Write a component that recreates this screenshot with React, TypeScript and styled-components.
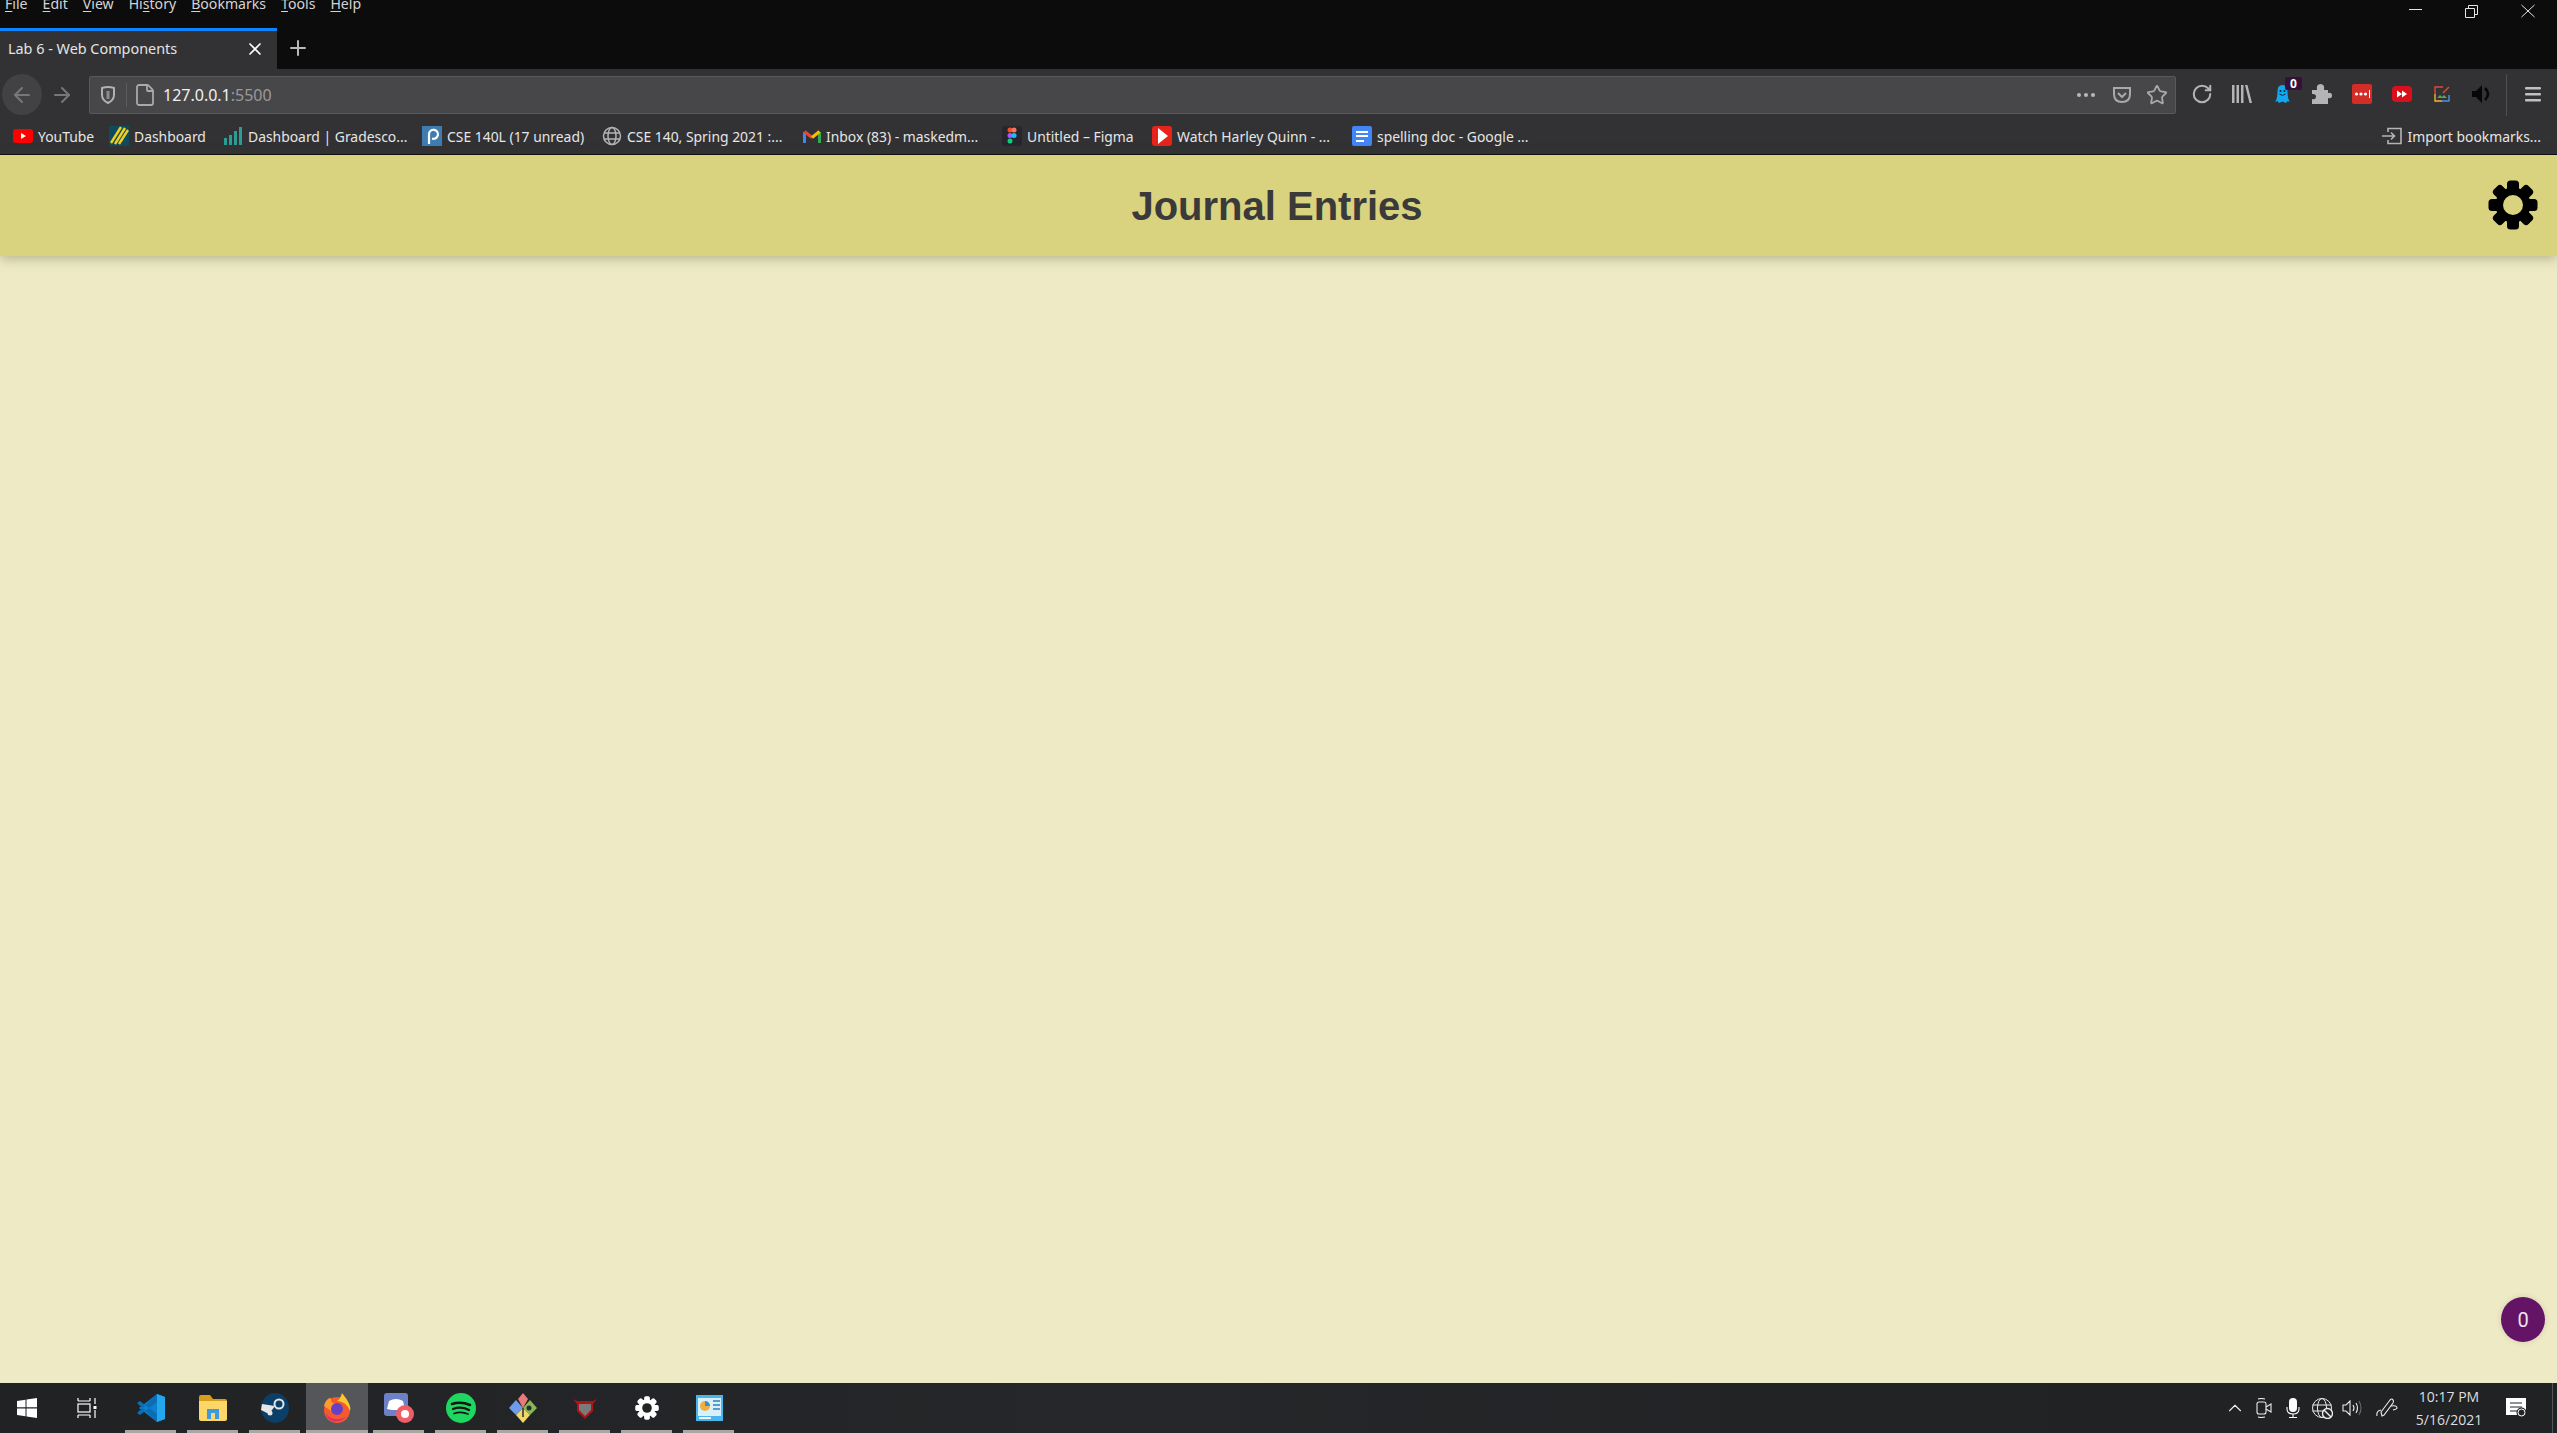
import { createGlobalStyle, styled } from 'styled-components';
import {
  ArrowLeft,
  ArrowRight,
  ChevronUp,
  File,
  Plus,
  RotateCw,
  Star,
  X,
} from 'lucide-react';

const GlobalStyle = createGlobalStyle`
  html, body, #root {
    height: 100%;
    margin: 0;
  }

  body {
    overflow: hidden;
    background-color: #eeeac5;
    font-family: 'Noto Sans', 'Open Sans', sans-serif;
  }
`;

const Page = styled.div`
  display: flex;
  flex-direction: column;

  width: 2557px;
  height: 1433px;
`;

const TitleBar = styled.div`
  display: flex;
  flex-shrink: 0;

  height: 69px;

  background-color: #0c0c0c;
`;

const TitleLeft = styled.div`
  display: flex;
  flex-direction: column;
  flex: 1;
`;

const MenuRow = styled.div`
  display: flex;
  gap: 15px;

  height: 28px;
  padding-left: 5px;

  overflow: hidden;
`;

const MenuItem = styled.span`
  margin-top: -6px;

  color: #d4d4d4;

  font-size: 14.1px;
  line-height: 20px;

  & > u {
    text-underline-offset: 2px;
  }
`;

const TabRow = styled.div`
  display: flex;
  align-items: center;

  height: 41px;
`;

const Tab = styled.div`
  display: flex;
  justify-content: space-between;
  align-items: center;

  width: 277px;
  height: 41px;
  padding: 0 12px 3px 8px;
  box-sizing: border-box;

  border-top: 3px solid #0a84ff;

  background-color: #323234;
  color: #e4e4e4;

  font-size: 14.4px;
`;

const NewTab = styled.div`
  display: flex;
  justify-content: center;

  width: 42px;
  margin-top: -2px;

  color: #b9b9bb;
`;

const WindowControls = styled.div`
  display: flex;
  gap: 43px;

  width: 148px;
  padding: 4px 0 0 0;
`;

const Toolbar = styled.div`
  display: flex;
  flex-shrink: 0;
  align-items: center;

  height: 49px;
  padding: 0 4px 0 2px;
  box-sizing: border-box;

  background-color: #323234;
`;

const NavButton = styled.div<{ $round?: boolean }>`
  display: flex;
  justify-content: center;
  align-items: center;

  width: 40px;
  height: 41px;
  margin-top: 2px;

  border-radius: 50%;
  background-color: ${({ $round }) => ($round ? '#424244' : 'transparent')};
  color: #77777a;
`;

const UrlBar = styled.div`
  display: flex;
  flex: 1;
  align-items: center;

  height: 38px;
  margin: 3px 0 0 7px;
  box-sizing: border-box;

  border: 1px solid #59595b;
  border-radius: 2px;
  background-color: #474749;
  color: #a9a9ab;
`;

const UrlSlot = styled.div<{ $width: number; $divider?: boolean }>`
  display: flex;
  justify-content: center;
  align-items: center;

  width: ${({ $width }) => $width}px;
  height: 24px;

  border-right: ${({ $divider }) => ($divider ? '1px solid #5d5d5f' : '0')};
`;

const UrlText = styled.div`
  flex: 1;

  color: #f0f0f0;

  font-size: 16px;

  & > span {
    color: #9a9a9c;
  }
`;

const ToolCell = styled.div`
  display: flex;
  justify-content: center;
  align-items: center;

  width: 40px;
  height: 40px;

  color: #b4b4b6;
`;

const ToolActions = styled.div`
  display: flex;

  margin-left: 6px;
`;

const ToolDivider = styled.div`
  width: 1px;
  height: 42px;
  margin: 3px 6px 0 4px;

  background-color: #505052;
`;

const BookmarksBar = styled.div`
  display: flex;
  flex-shrink: 0;
  align-items: center;

  height: 37px;
  padding: 0 16px 0 13px;
  box-sizing: border-box;

  border-bottom: 1px solid #0c0c0c;

  background-color: #323234;
  color: #e6e6e6;

  font-size: 13.9px;
`;

const Bookmark = styled.div<{ $width: number }>`
  display: flex;
  align-items: center;
  gap: 5px;

  width: ${({ $width }) => $width}px;

  white-space: nowrap;
`;

const ImportBookmarks = styled.div`
  display: flex;
  align-items: center;
  gap: 5px;

  margin-left: auto;

  white-space: nowrap;
`;

const Content = styled.main`
  flex: 1;
  position: relative;

  background-color: #eeeac5;
`;

const Header = styled.header`
  display: grid;
  grid-template-columns: 1fr auto 1fr;
  align-items: center;

  height: 101px;

  background-color: #d9d27e;
  box-shadow: 0 2px 12px rgba(60, 60, 30, 0.35);
`;

const Title = styled.h1`
  grid-column: 2;
  margin: 2px 0 0 -3px;

  color: #3a3a3a;

  font-family: 'Liberation Sans', Arial, sans-serif;
  font-size: 40px;
  font-weight: bold;
`;

const SettingsButton = styled.div`
  display: flex;
  justify-self: end;

  margin: -2px 19px 0 0;
`;

const CountBadge = styled.div`
  display: flex;
  justify-content: center;
  align-items: center;

  width: 44px;
  height: 45px;

  position: absolute;
  right: 12px;
  bottom: 41px;

  border-radius: 50%;
  background-color: #641464;
  box-shadow: 0 0 6px rgba(0, 0, 0, 0.12);
  color: #eee2ee;

  font-family: Roboto, sans-serif;
  font-size: 20px;
`;

const Taskbar = styled.footer`
  display: flex;
  flex-shrink: 0;

  height: 50px;

  background: linear-gradient(90deg, #212224 0%, #26272a 45%, #222325 70%, #212224 100%);
`;

const StartCell = styled.div<{ $width: number }>`
  display: flex;
  justify-content: center;
  align-items: center;

  width: ${({ $width }) => $width}px;
`;

const TaskCell = styled.div<{ $active?: boolean }>`
  display: flex;
  justify-content: center;
  align-items: center;

  width: 62px;

  position: relative;

  background-color: ${({ $active }) => ($active ? '#55565a' : 'transparent')};

  &::after {
    content: '';

    height: 3px;

    position: absolute;
    left: ${({ $active }) => ($active ? '0' : '5px')};
    right: ${({ $active }) => ($active ? '0' : '6px')};
    bottom: 0;

    background-color: #aba6a1;
  }
`;

const Tray = styled.div`
  display: flex;
  align-items: center;

  height: 100%;
  margin-left: auto;
  padding-right: 4px;
  color: #ececec;
`;

const TrayIcon = styled.div<{ $width: number }>`
  display: flex;
  justify-content: center;

  width: ${({ $width }) => $width}px;
`;

const Clock = styled.div`
  width: 82px;

  color: #dedede;

  font-family: 'Open Sans', sans-serif;
  font-size: 14px;
  line-height: 23px;
  text-align: center;
`;

const DesktopEdge = styled.div`
  width: 1px;
  height: 100%;
  margin-left: 10px;

  background-color: #55565a;
`;

const Gear = ({ size, color, hole }: { size: number; color: string; hole: string }) => (
  <svg width={size} height={size} viewBox="0 0 100 100">
    {[0, 45, 90, 135].map((angle) => (
      <rect
        key={angle}
        x="38"
        y="1"
        width="24"
        height="98"
        rx="7"
        fill={color}
        transform={`rotate(${angle} 50 50)`}
      />
    ))}
    <circle cx="50" cy="50" r="35" fill={color} />
    <circle cx="50" cy="50" r="20" fill={hole} />
  </svg>
);

const Shield = () => (
  <svg width="16" height="20" viewBox="0 0 16 20" fill="none" stroke="#b0b0b2" strokeWidth="2">
    <path d="M2 3 Q8 1 14 3 V10 Q14 15 8 18 Q2 15 2 10 Z" />
    <path d="M8 6 V14" strokeWidth="3" stroke="#8c8c8e" />
  </svg>
);

const Pocket = () => (
  <svg width="20" height="18" viewBox="0 0 20 18" fill="none" stroke="#a9a9ab" strokeWidth="2">
    <path d="M2 2 H18 V8 Q18 16 10 16 Q2 16 2 8 Z" />
    <path d="M6 7 L10 11 L14 7" />
  </svg>
);

const Library = () => (
  <svg width="20" height="18" viewBox="0 0 20 18" fill="#b4b4b6">
    <rect x="0" y="0" width="2.5" height="18" />
    <rect x="4.5" y="0" width="2.5" height="18" />
    <rect x="9" y="0" width="2.5" height="18" />
    <path d="M13 0 L15.5 0 L20 18 L17.5 18 Z" />
  </svg>
);

const Ghost = () => (
  <svg width="40" height="34" viewBox="0 0 40 34">
    <path
      d="M13 25 Q15.5 22 15.5 14 Q15.5 8 20.5 8 Q25.5 8 25.5 14 Q25.5 22 28 25 L25.5 24 L24 26 L20.5 24.5 L17 26 L15.5 24 Z"
      fill="#12a8f0"
    />
    <circle cx="18.5" cy="14" r="1.1" fill="#0c2a3a" />
    <circle cx="22.5" cy="14" r="1.1" fill="#0c2a3a" />
    <path d="M17.5 17 Q20.5 20 23.5 17" fill="none" stroke="#0c2a3a" />
    <rect x="23" y="0" width="17" height="13" rx="2" fill="#35103a" />
    <text x="31.5" y="10.5" fill="#ffffff" fontSize="12" fontWeight="700" textAnchor="middle">
      0
    </text>
  </svg>
);

const PuzzlePiece = () => (
  <svg width="20" height="20" viewBox="0 0 20 20" fill="#b4b4b6">
    <path d="M0 6 H5 Q4 0 8.5 0 Q13 0 12 6 H16 V9 Q20 8 20 11.5 Q20 15 16 14 V20 H0 V15 Q4 16 4 12.5 Q4 9.5 0 10 Z" />
  </svg>
);

const LastPass = () => (
  <svg width="20" height="20" viewBox="0 0 20 20">
    <rect width="20" height="20" rx="2" fill="#d32d27" />
    <circle cx="4.5" cy="10" r="1.6" fill="#fff" />
    <circle cx="9" cy="10" r="1.6" fill="#fff" />
    <circle cx="13.5" cy="10" r="1.6" fill="#fff" />
    <rect x="17" y="6" width="1" height="8" fill="#fff" />
  </svg>
);

const FastForward = () => (
  <svg width="20" height="16" viewBox="0 0 20 16">
    <rect width="20" height="16" rx="4" fill="#d8101c" />
    <path d="M5 4.5 L10 8 L5 11.5 Z M10 4.5 L15 8 L10 11.5 Z" fill="#fff" />
  </svg>
);

const ColorFrame = () => (
  <svg width="16" height="16" viewBox="0 0 16 16" fill="none" strokeWidth="1.4">
    <path d="M9 1 H1 V8" stroke="#e0483a" />
    <path d="M1 8 V15 H8" stroke="#f2b632" />
    <path d="M8 15 H15 V9" stroke="#4f8fe6" />
    <path d="M15 1 L9 7" stroke="#e0483a" />
    <path d="M3 12 L6 9 L8 11 L10 9 L13 12 Z" fill="#5fa052" stroke="none" />
  </svg>
);

const BlackSpeaker = () => (
  <svg width="20" height="20" viewBox="0 0 20 20">
    <path d="M0 7 H4 L10 1 V19 L4 13 H0 Z" fill="#070707" />
    <path d="M13 4 Q19 10 13 16" fill="none" stroke="#070707" strokeWidth="2.5" />
  </svg>
);

const Hamburger = () => (
  <svg width="16" height="16" viewBox="0 0 16 16" fill="#c0c0c2">
    <rect y="1" width="16" height="2.4" rx="1" />
    <rect y="7" width="16" height="2.4" rx="1" />
    <rect y="13" width="16" height="2.4" rx="1" />
  </svg>
);

const YouTubeFav = () => (
  <svg width="20" height="14" viewBox="0 0 20 14">
    <rect width="20" height="14" rx="3" fill="#f00" />
    <path d="M8 4 L13 7 L8 10 Z" fill="#fff" />
  </svg>
);

const CanvasFav = () => (
  <svg width="20" height="20" viewBox="0 0 20 20">
    <rect width="20" height="20" fill="#0f4b5e" />
    <path d="M2 17 L12 1 M6 18 L16 2 M10 18 L19 4" stroke="#f2cf1d" strokeWidth="2.4" />
  </svg>
);

const GradescopeFav = () => (
  <svg width="20" height="18" viewBox="0 0 20 18" fill="#2a9d96">
    <rect x="1" y="11" width="3" height="7" />
    <rect x="6" y="8" width="3" height="10" />
    <rect x="11" y="4" width="3" height="14" />
    <rect x="16" y="0" width="3" height="18" />
  </svg>
);

const PiazzaFav = () => (
  <svg width="20" height="20" viewBox="0 0 20 20">
    <rect width="20" height="20" fill="#3f7cb1" />
    <path d="M7 18 V8 A4.5 4.5 0 1 1 10 12.5" fill="none" stroke="#fff" strokeWidth="2.2" />
  </svg>
);

const GlobeFav = () => (
  <svg width="20" height="20" viewBox="0 0 20 20" fill="none" stroke="#b4b4b6" strokeWidth="1.5">
    <circle cx="10" cy="10" r="8.5" />
    <ellipse cx="10" cy="10" rx="4" ry="8.5" />
    <path d="M2 7 H18 M2 13 H18" />
  </svg>
);

const GmailFav = () => (
  <svg width="18" height="14" viewBox="0 0 18 14" fill="none" strokeWidth="3">
    <path d="M1.5 14 V3" stroke="#4285f4" />
    <path d="M16.5 14 V3" stroke="#34a853" />
    <path d="M1.5 2.5 L9 8.5" stroke="#ea4335" />
    <path d="M9 8.5 L16.5 2.5" stroke="#fbbc04" />
  </svg>
);

const FigmaFav = () => (
  <svg width="20" height="20" viewBox="0 0 20 20">
    <rect width="20" height="20" rx="3" fill="#26262c" />
    <circle cx="8" cy="4" r="2.5" fill="#f24e1e" />
    <circle cx="12" cy="4" r="2.5" fill="#ff7262" />
    <circle cx="8" cy="9.5" r="2.5" fill="#a259ff" />
    <circle cx="12" cy="9.5" r="2.5" fill="#1abcfe" />
    <circle cx="8" cy="15" r="2.5" fill="#0acf83" />
  </svg>
);

const PlayFav = () => (
  <svg width="20" height="20" viewBox="0 0 20 20">
    <rect width="20" height="20" rx="3" fill="#e8231a" />
    <path d="M6 2 L16 10 L6 18 Z" fill="#fff" />
  </svg>
);

const DocsFav = () => (
  <svg width="20" height="20" viewBox="0 0 20 20">
    <rect x="0" width="20" height="20" rx="2" fill="#4285f4" />
    <rect x="4" y="5" width="12" height="2" fill="#fff" />
    <rect x="4" y="9" width="12" height="2" fill="#fff" />
    <rect x="4" y="14" width="8" height="2" fill="#fff" />
  </svg>
);

const ImportIcon = () => (
  <svg width="20" height="18" viewBox="0 0 20 18" fill="none" stroke="#b4b4b6" strokeWidth="1.6">
    <path d="M6 5 V1.5 H19 V16.5 H6 V13" />
    <path d="M0 9 H12 M9 5.5 L12.5 9 L9 12.5" />
  </svg>
);

const WindowsLogo = () => (
  <svg width="20" height="20" viewBox="0 0 20 20" fill="#ffffff">
    <path d="M0 3 L8.5 1.7 V9.3 H0 Z M9.5 1.5 L20 0 V9.3 H9.5 Z M0 10.5 H8.5 V18.3 L0 17 Z M9.5 10.5 H20 V20 L9.5 18.5 Z" />
  </svg>
);

const TaskView = () => (
  <svg width="20" height="20" viewBox="0 0 20 20" fill="none" stroke="#ffffff" strokeWidth="1.2">
    <path d="M1 3 H13 M1 0 V3 M13 0 V3 M1 17 H13 M1 20 V17 M13 20 V17" />
    <rect x="1" y="6" width="12" height="8" />
    <path d="M18 0 V6 M18 12 V20" />
    <rect x="16.5" y="8" width="3" height="3" fill="#fff" stroke="none" />
  </svg>
);

const VsCode = () => (
  <svg width="30" height="30" viewBox="0 0 30 30">
    <path d="M21 1 L29 4 V26 L21 29 L3 15 Z" fill="#0e80cc" />
    <path d="M21 1 L29 4 V26 L21 29 Z" fill="#22a6ee" />
    <path d="M1 10 L4 8 L21 21 V29 Z M1 20 L4 22 L21 9 V1 Z" fill="#0a6db5" />
  </svg>
);

const Explorer = () => (
  <svg width="28" height="26" viewBox="0 0 28 26">
    <path d="M0 2 Q0 0 2 0 H11 L14 4 H26 Q28 4 28 6 V10 H0 Z" fill="#d69e1a" />
    <path d="M0 6 H28 V24 Q28 26 26 26 H2 Q0 26 0 24 Z" fill="#fcd667" />
    <path d="M8 24 V14 H20 V24 H16 V18 H12 V24 Z" fill="#3d9ae0" />
  </svg>
);

const Steam = () => (
  <svg width="30" height="30" viewBox="0 0 30 30">
    <ellipse cx="15" cy="15" rx="14" ry="15" fill="#0b3f68" />
    <path d="M1 17 L9 21 L15 13 L2 11 Z" fill="#e6e6e6" />
    <circle cx="19" cy="11" r="4.5" fill="none" stroke="#e6e6e6" strokeWidth="2" />
    <circle cx="10" cy="20" r="2.5" fill="#e6e6e6" />
  </svg>
);

const Firefox = () => (
  <svg width="30" height="30" viewBox="0 0 30 30">
    <circle cx="15" cy="17" r="13" fill="#f35b2d" />
    <path d="M20 0 Q30 12 28 18 Q24 8 15 8 Q19 5 20 0 Z" fill="#ffc52e" />
    <path d="M2 13 Q4 5 9 5 Q8 9 13 11 L9 18 Z" fill="#ff9a30" />
    <circle cx="15" cy="16" r="6" fill="#6a3fc8" />
    <path d="M4 20 Q10 30 24 24 Q18 30 10 28 Q5 26 4 20 Z" fill="#e52a70" />
  </svg>
);

const DiscordRec = () => (
  <svg width="30" height="30" viewBox="0 0 30 30">
    <rect x="0" y="0" width="24" height="23" rx="3" fill="#6d81c6" />
    <path d="M5 8 Q12 4 19 8 L21 16 L16 17 H8 L3 16 Z" fill="#fff" />
    <circle cx="21" cy="21" r="9" fill="#ef5e68" />
    <circle cx="21" cy="21" r="4" fill="#fff" />
  </svg>
);

const Spotify = () => (
  <svg width="30" height="30" viewBox="0 0 30 30" fill="none" stroke="#191414" strokeLinecap="round">
    <ellipse cx="15" cy="15" rx="15" ry="15" fill="#1ed760" stroke="none" />
    <path d="M6 11 Q15 8 24 12" strokeWidth="2.6" />
    <path d="M7 16 Q15 13 23 17" strokeWidth="2.2" />
    <path d="M8 20.5 Q15 18 22 21" strokeWidth="1.8" />
  </svg>
);

const GitKraken = () => (
  <svg width="30" height="30" viewBox="0 0 30 30">
    <path d="M15 15 L8 7 L1 15 L8 22 Z" fill="#6e9bea" />
    <path d="M15 15 L22 7 L29 15 L22 22 Z" fill="#86b856" />
    <path d="M15 15 L8 22 L15 30 L22 22 Z" fill="#f2d768" />
    <path d="M15 15 L10 6 L15 0 L20 6 Z" fill="#e87a7a" />
    <circle cx="21" cy="15" r="2.5" fill="#2c2c2c" />
    <path d="M15 15 V24" stroke="#2c2c2c" strokeWidth="1.5" />
  </svg>
);

const RedShield = () => (
  <svg width="24" height="22" viewBox="0 0 24 22">
    <path d="M0 2 L4 4 H20 L24 2 L20 7 V14 L12 22 L4 14 V7 Z" fill="#b01416" />
    <path d="M6 7 H18 V13 L12 19 L6 13 Z" fill="#7a7a7a" />
  </svg>
);

const ControlPanel = () => (
  <svg width="27" height="26" viewBox="0 0 27 26">
    <rect width="27" height="26" fill="#48b6ec" />
    <rect x="2" y="3" width="23" height="18" fill="#d8f0fb" />
    <circle cx="9" cy="11" r="5" fill="#f0b040" />
    <path d="M9 11 V6 A5 5 0 0 1 14 11 Z" fill="#3a8fd0" />
    <path d="M17 6 H24 M17 10 H24 M17 14 H24" stroke="#2c7fb8" strokeWidth="1.5" />
    <rect x="3" y="22" width="12" height="2" fill="#f4f4f4" />
  </svg>
);

const MeetNow = () => (
  <svg width="16" height="20" viewBox="0 0 16 20" fill="none" stroke="#ececec" strokeWidth="1.1">
    <rect x="1" y="4" width="9" height="12" rx="2" />
    <path d="M10 9 L15 6 V14 L10 11" />
    <path d="M2 1 Q5 0 9 1 M2 19 Q5 20 9 19" />
  </svg>
);

const FilledMic = () => (
  <svg width="14" height="20" viewBox="0 0 14 20" fill="none" stroke="#ffffff" strokeWidth="1.1">
    <rect x="3" y="0" width="8" height="14" rx="4" fill="#ffffff" stroke="none" />
    <path d="M1 9 V11 Q1 16 7 16 Q13 16 13 11 V9 M7 16 V19.5 M3 19.5 H11" />
  </svg>
);

const BlockedGlobe = () => (
  <svg width="21" height="21" viewBox="0 0 21 21" fill="none" stroke="#ececec" strokeWidth="1">
    <circle cx="10" cy="10" r="9.5" />
    <ellipse cx="10" cy="10" rx="4.5" ry="9.5" />
    <path d="M0.5 7 H19.5 M0.5 13 H19.5" />
    <circle cx="15.5" cy="15.5" r="5" fill="#232426" strokeWidth="1.4" />
    <path d="M12 12 L19 19" strokeWidth="1.4" />
  </svg>
);

const TraySpeaker = () => (
  <svg width="20" height="16" viewBox="0 0 20 16" fill="none" stroke="#ececec" strokeWidth="1.1">
    <path d="M1 5 H4 L8 1 V15 L4 11 H1 Z" />
    <path d="M11 5 Q13 8 11 11" />
    <path d="M14 3 Q17 8 14 13" />
    <path d="M17 1 Q21 8 17 15" stroke="#6a6a6c" />
  </svg>
);

const Pen = () => (
  <svg width="22" height="20" viewBox="0 0 22 20" fill="none" stroke="#ececec" strokeWidth="1.1">
    <path d="M6 18 L5 14 L14 2 Q16 0 17 2 Q18 3 17 5 L8 17 Z" />
    <path d="M1 18 Q0 13 5 12 M15 8 Q21 7 21 10 Q21 11 17 12" />
  </svg>
);

const ActionCenter = () => (
  <svg width="21" height="20" viewBox="0 0 21 20">
    <path d="M0 0 H20 V17 H0 Z" fill="#ffffff" />
    <path d="M4 5 H16 M4 9 H16 M4 13 H11" stroke="#232426" strokeWidth="1.2" />
    <circle cx="15.5" cy="14.5" r="5" fill="#232426" />
    <circle cx="15.5" cy="14.5" r="3.5" fill="none" stroke="#fff" />
  </svg>
);

const bookmarks = [
  { label: 'YouTube', width: 96, icon: <YouTubeFav /> },
  { label: 'Dashboard', width: 114, icon: <CanvasFav /> },
  { label: 'Dashboard | Gradesco...', width: 199, icon: <GradescopeFav /> },
  { label: 'CSE 140L (17 unread)', width: 180, icon: <PiazzaFav /> },
  { label: 'CSE 140, Spring 2021 :...', width: 201, icon: <GlobeFav /> },
  { label: 'Inbox (83) - maskedm...', width: 199, icon: <GmailFav /> },
  { label: 'Untitled – Figma', width: 150, icon: <FigmaFav /> },
  { label: 'Watch Harley Quinn - ...', width: 200, icon: <PlayFav /> },
  { label: 'spelling doc - Google ...', width: 190, icon: <DocsFav /> },
];

const taskIcons = [
  <VsCode key="code" />,
  <Explorer key="explorer" />,
  <Steam key="steam" />,
  <Firefox key="firefox" />,
  <DiscordRec key="discord" />,
  <Spotify key="spotify" />,
  <GitKraken key="kraken" />,
  <RedShield key="shield" />,
  <Gear key="settings" size={24} color="#ffffff" hole="#222325" />,
  <ControlPanel key="panel" />,
];

export default function App() {
  return (
    <Page>
      <GlobalStyle />
      <TitleBar>
        <TitleLeft>
          <MenuRow>
            <MenuItem><u>F</u>ile</MenuItem>
            <MenuItem><u>E</u>dit</MenuItem>
            <MenuItem><u>V</u>iew</MenuItem>
            <MenuItem>Hi<u>s</u>tory</MenuItem>
            <MenuItem><u>B</u>ookmarks</MenuItem>
            <MenuItem><u>T</u>ools</MenuItem>
            <MenuItem><u>H</u>elp</MenuItem>
          </MenuRow>
          <TabRow>
            <Tab>
              Lab 6 - Web Components
              <X size={20} color="#ffffff" strokeWidth={2} />
            </Tab>
            <NewTab>
              <Plus size={24} strokeWidth={2} />
            </NewTab>
          </TabRow>
        </TitleLeft>
        <WindowControls>
          <svg width="13" height="14" viewBox="0 0 13 14" stroke="#e6e6e6">
            <path d="M0 5.5 H13" />
          </svg>
          <svg width="13" height="14" viewBox="0 0 13 14" fill="none" stroke="#e6e6e6">
            <path d="M0.5 4.5 H9.5 V13.5 H0.5 Z M3.5 4 V1.5 H12.5 V10.5 H10" />
          </svg>
          <svg width="14" height="14" viewBox="0 0 14 14" stroke="#e6e6e6">
            <path d="M0.5 1 L13.5 13 M13.5 1 L0.5 13" />
          </svg>
        </WindowControls>
      </TitleBar>
      <Toolbar>
        <NavButton $round>
          <ArrowLeft size={24} strokeWidth={2} />
        </NavButton>
        <NavButton>
          <ArrowRight size={24} strokeWidth={2} />
        </NavButton>
        <UrlBar>
          <UrlSlot $width={36} $divider>
            <Shield />
          </UrlSlot>
          <UrlSlot $width={36}>
            <File size={24} strokeWidth={1.8} />
          </UrlSlot>
          <UrlText>
            127.0.0.1<span>:5500</span>
          </UrlText>
          <UrlSlot $width={36}>
            <svg width="20" height="4" viewBox="0 0 20 4" fill="#b8b8ba">
              <circle cx="3" cy="2" r="2" />
              <circle cx="10" cy="2" r="2" />
              <circle cx="17" cy="2" r="2" />
            </svg>
          </UrlSlot>
          <UrlSlot $width={35}>
            <Pocket />
          </UrlSlot>
          <UrlSlot $width={36}>
            <Star size={22} strokeWidth={2} />
          </UrlSlot>
        </UrlBar>
        <ToolActions>
          <ToolCell>
            <RotateCw size={22} strokeWidth={2.2} />
          </ToolCell>
          <ToolCell>
            <Library />
          </ToolCell>
          <ToolCell>
            <Ghost />
          </ToolCell>
          <ToolCell>
            <PuzzlePiece />
          </ToolCell>
          <ToolCell>
            <LastPass />
          </ToolCell>
          <ToolCell>
            <FastForward />
          </ToolCell>
          <ToolCell>
            <ColorFrame />
          </ToolCell>
          <ToolCell>
            <BlackSpeaker />
          </ToolCell>
        </ToolActions>
        <ToolDivider />
        <ToolCell>
          <Hamburger />
        </ToolCell>
      </Toolbar>
      <BookmarksBar>
        {bookmarks.map((bookmark) => (
          <Bookmark key={bookmark.label} $width={bookmark.width}>
            {bookmark.icon}
            {bookmark.label}
          </Bookmark>
        ))}
        <ImportBookmarks>
          <ImportIcon />
          Import bookmarks...
        </ImportBookmarks>
      </BookmarksBar>
      <Content>
        <Header>
          <Title>Journal Entries</Title>
          <SettingsButton>
            <Gear size={50} color="#000000" hole="#d9d27e" />
          </SettingsButton>
        </Header>
        <CountBadge>0</CountBadge>
      </Content>
      <Taskbar>
        <StartCell $width={54}>
          <WindowsLogo />
        </StartCell>
        <StartCell $width={66}>
          <TaskView />
        </StartCell>
        {taskIcons.map((icon, index) => (
          <TaskCell key={index} $active={index === 3}>
            {icon}
          </TaskCell>
        ))}
        <Tray>
          <TrayIcon $width={29}>
            <ChevronUp size={22} strokeWidth={1.2} />
          </TrayIcon>
          <TrayIcon $width={29}>
            <MeetNow />
          </TrayIcon>
          <TrayIcon $width={29}>
            <FilledMic />
          </TrayIcon>
          <TrayIcon $width={30}>
            <BlockedGlobe />
          </TrayIcon>
          <TrayIcon $width={29}>
            <TraySpeaker />
          </TrayIcon>
          <TrayIcon $width={42}>
            <Pen />
          </TrayIcon>
          <Clock>
            10:17 PM
            <br />
            5/16/2021
          </Clock>
          <TrayIcon $width={52}>
            <ActionCenter />
          </TrayIcon>
          <DesktopEdge />
        </Tray>
      </Taskbar>
    </Page>
  );
}
